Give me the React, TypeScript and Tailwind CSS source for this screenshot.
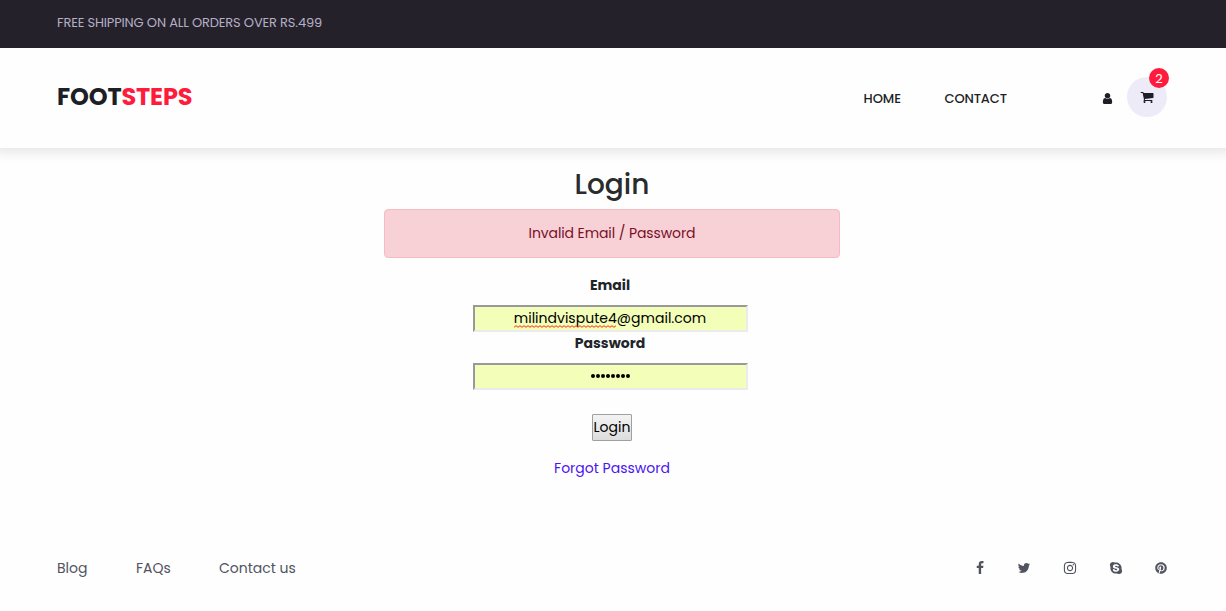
import React from "react";
import { FaInstagram, FaPinterest, FaSkype } from "react-icons/fa";

function Glyph({ d, className }: { d: string; className: string }) {
  return (
    <svg viewBox="0 0 1792 1792" fill="currentColor" className={className} aria-hidden="true">
      <path d={d} />
    </svg>
  );
}

const USER =
  "M1536 1399q0 109-62.5 187t-150.5 78h-854q-88 0-150.5-78t-62.5-187q0-85 8.5-160.5t31.5-152 58.5-131 94-89 134.5-34.5q131 128 313 128t313-128q76 0 134.5 34.5t94 89 58.5 131 31.5 152 8.5 160.5zm-256-887q0 159-112.5 271.5t-271.5 112.5-271.5-112.5-112.5-271.5 112.5-271.5 271.5-112.5 271.5 112.5 112.5 271.5z";
const CART =
  "M704 1536q0 52-38 90t-90 38-90-38-38-90 38-90 90-38 90 38 38 90zm896 0q0 52-38 90t-90 38-90-38-38-90 38-90 90-38 90 38 38 90zm128-1088v512q0 24-16.5 42.5t-40.5 21.5l-1044 122q13 60 13 70 0 16-24 64h920q26 0 45 19t19 45-19 45-45 19h-1024q-26 0-45-19t-19-45q0-11 8-31.5t16-36 21.5-40 15.5-29.5l-177-823h-204q-26 0-45-19t-19-45 19-45 45-19h256q16 0 28.5 6.5t19.5 15.5 13 24.5 8 26 5.5 29.5 4.5 26h1201q26 0 45 19t19 45z";
const FACEBOOK =
  "M1343 12v264h-157q-86 0-116 36t-30 108v189h293l-39 296h-254v759h-306v-759h-255v-296h255v-218q0-186 104-288.5t277-102.5q147 0 228 12z";
const TWITTER =
  "M1684 408q-67 98-162 167 1 14 1 42 0 130-38 259.5t-115.5 248.5-184.5 210.5-258 146-323 54.5q-271 0-496-145 35 4 78 4 225 0 401-138-105-2-188-64.5t-114-159.5q33 5 61 5 43 0 85-11-112-23-185.5-111.5t-73.5-205.5v-4q68 38 146 41-66-44-105-115t-39-154q0-88 44-163 121 149 294.5 238.5t371.5 99.5q-8-38-8-74 0-134 94.5-228.5t228.5-94.5q140 0 236 102 109-21 205-78-37 115-142 178 93-10 186-50z";

function Header() {
  return (
    <header>
      <div className="relative z-10 flex h-12 items-center bg-[#24212b] pl-[57px] pb-[3px] text-[13px] text-[#b5aec4]">
        <span className="tracking-[-0.16px]">FREE SHIPPING ON ALL ORDERS OVER RS.499</span>
      </div>
      <div className="flex h-[100px] items-center bg-[#fefefe] pl-[57px] pr-[59px] shadow-[0_-6px_14px_8px_rgba(0,0,0,0.13)]">
        <a href="#" className="pb-[2px] text-[24px] font-bold leading-9 tracking-[-0.15px] text-[#1e1e27]">
          FOOT<span className="text-[#fe1b3b]">STEPS</span>
        </a>
        <nav className="ml-auto flex items-center text-[13px] font-medium leading-5 text-[#1e1e27]">
          <a href="#" className="w-[81px] pt-px">HOME</a>
          <a href="#" className="w-[156.5px] pt-px tracking-[-0.15px]">CONTACT</a>
          <Glyph d={USER} className="mr-[13px] mt-px size-[13px]" />
          <a href="#" className="relative mb-[2px] flex size-10 items-center justify-center rounded-full bg-[#ecebf7]">
            <Glyph d={CART} className="size-[14px]" />
            <span className="absolute -top-[9px] left-[22px] flex size-5 items-center justify-center rounded-full bg-[#fe1b3b] pt-px text-[13px] font-normal text-white">
              2
            </span>
          </a>
        </nav>
      </div>
    </header>
  );
}

function LoginForm() {
  return (
    <main className="mr-[2px] flex h-[391px] flex-col items-center pt-[18px] text-[14px] text-[#212529]">
      <h1 className="h-[43px] pt-px text-[28px] font-medium leading-[36px] text-[#292b2c]">Login</h1>
      <div className="flex h-[49px] w-[456px] items-center justify-center rounded-[4px] border border-[#f5bcc4] bg-[#f8d1d6] tracking-[-0.1px] text-[#7a1029]">
        Invalid Email / Password
      </div>
      <div className="mt-[17px] mr-1 flex flex-col items-center">
        <label className="h-[30px] font-bold leading-5">Email</label>
        <div className="flex h-[27px] w-[275px] items-center justify-center border-2 border-b-[#ebebeb] border-l-[#999] border-r-[#ebebeb] border-t-[#999] bg-[#f3feb9] text-black">
          <span className="relative tracking-[0.02px]">
            milindvispute4@gmail.com
            <svg className="absolute left-0 top-[17px] h-[3px] w-[102px] text-[#ff2a1a]" viewBox="0 0 102 3" fill="none" stroke="currentColor" aria-hidden="true">
              <path d={`M0 2.3${"l2-1.6l2 1.6".repeat(26)}`} />
            </svg>
          </span>
        </div>
        <label className="h-[31px] pt-px font-bold leading-5">Password</label>
        <div className="flex h-[27px] w-[275px] items-center justify-center gap-px border-2 border-b-[#ebebeb] border-l-[#999] border-r-[#ebebeb] border-t-[#999] bg-[#f3feb9] pb-px">
          {Array.from({ length: 8 }, (_, i) => (
            <span key={i} className="size-[4px] rounded-full bg-black" />
          ))}
        </div>
      </div>
      <button className="mt-6 h-[27px] w-10 whitespace-nowrap rounded-[1px] border border-[#a0a0a0] bg-linear-to-b from-[#f3f3f3] to-[#dddddd] text-center text-[14px] leading-[25px] text-black">
        Login
      </button>
      <a href="#" className="mt-[17px] leading-5 text-[#4b14f0]">Forgot Password</a>
    </main>
  );
}

function Footer() {
  return (
    <footer className="flex h-[58px] items-center pl-[57px] pr-[59px] text-[14px] text-[#51545f]">
      <a href="#" className="w-[79px]">Blog</a>
      <a href="#" className="w-[83px]">FAQs</a>
      <a href="#">Contact us</a>
      <div className="ml-auto flex items-center">
        <Glyph d={FACEBOOK} className="mr-[30px] size-[14px]" />
        <Glyph d={TWITTER} className="mr-8 size-[14px]" />
        <FaInstagram className="mr-[32px] size-[14px]" />
        <FaSkype className="mr-[32px] size-[14px]" />
        <FaPinterest className="size-[12px]" />
      </div>
    </footer>
  );
}

export default function App() {
  return (
    <div className="h-[611px] overflow-hidden bg-[#fefefe] font-[Poppins,Inter,sans-serif] [font-feature-settings:'cv11']">
      <Header />
      <LoginForm />
      <Footer />
    </div>
  );
}
